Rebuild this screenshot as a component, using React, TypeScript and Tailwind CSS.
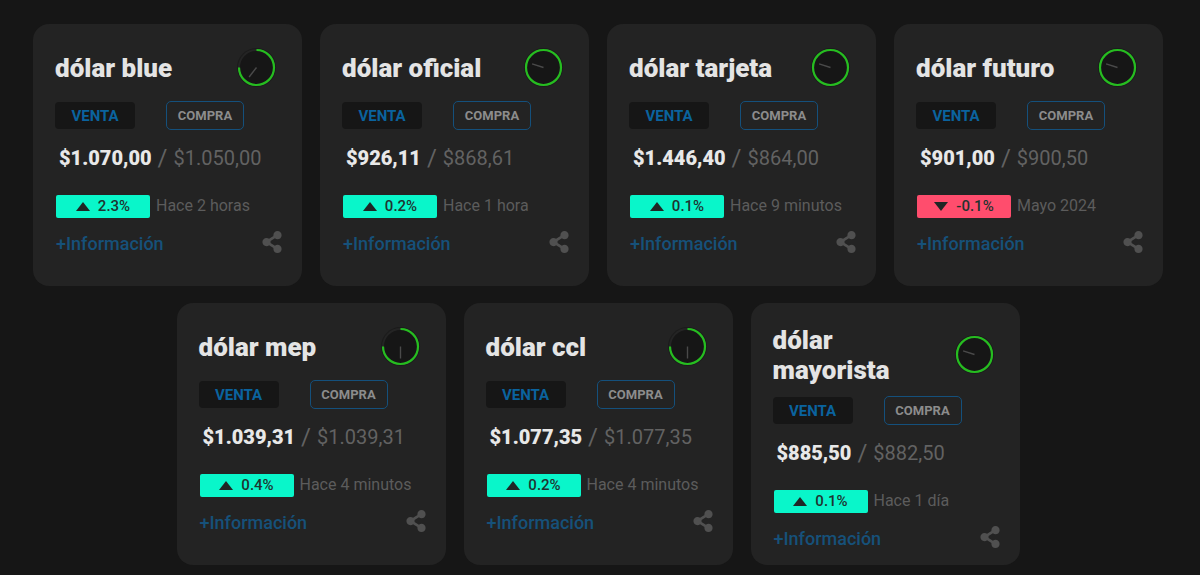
import { FaShareAlt } from 'react-icons/fa'

interface Cotizacion {
  id: string
  nombre: string
  venta: string
  compra: string
  variacion: string
  sube: boolean
  fecha: string
  progreso: number
  aguja: number
}

const cotizaciones: Cotizacion[] = [
  { id: 'blue', nombre: 'dólar blue', venta: '$1.070,00', compra: '$1.050,00', variacion: '2.3%', sube: true, fecha: 'Hace 2 horas', progreso: 75, aguja: 38 },
  { id: 'oficial', nombre: 'dólar oficial', venta: '$926,11', compra: '$868,61', variacion: '0.2%', sube: true, fecha: 'Hace 1 hora', progreso: 100, aguja: 108 },
  { id: 'tarjeta', nombre: 'dólar tarjeta', venta: '$1.446,40', compra: '$864,00', variacion: '0.1%', sube: true, fecha: 'Hace 9 minutos', progreso: 100, aguja: 108 },
  { id: 'futuro', nombre: 'dólar futuro', venta: '$901,00', compra: '$900,50', variacion: '-0.1%', sube: false, fecha: 'Mayo 2024', progreso: 100, aguja: 108 },
  { id: 'mep', nombre: 'dólar mep', venta: '$1.039,31', compra: '$1.039,31', variacion: '0.4%', sube: true, fecha: 'Hace 4 minutos', progreso: 75, aguja: 0 },
  { id: 'ccl', nombre: 'dólar ccl', venta: '$1.077,35', compra: '$1.077,35', variacion: '0.2%', sube: true, fecha: 'Hace 4 minutos', progreso: 75, aguja: 0 },
  { id: 'mayorista', nombre: 'dólar mayorista', venta: '$885,50', compra: '$882,50', variacion: '0.1%', sube: true, fecha: 'Hace 1 día', progreso: 100, aguja: 108 },
]

function Reloj({ progreso, aguja }: { progreso: number; aguja: number }) {
  return (
    <svg className="w-11 h-11 shrink-0" viewBox="0 0 44 44" fill="none" aria-hidden="true">
      <circle cx="22.5" cy="21.5" r="19.5" fill="#1b1b1b" />
      <circle cx="22.5" cy="21.5" r="17.5" fill="#161616" stroke="#242424" strokeWidth="2" />
      <circle
        cx="22.5"
        cy="21.5"
        r="17.5"
        stroke="#26bd20"
        strokeWidth="2.2"
        pathLength={100}
        strokeDasharray={`${progreso} 100`}
        transform="rotate(-90 22.5 21.5)"
      />
      {/* 0 grados apunta hacia abajo */}
      <path d="M22.5 21.5v12" stroke="#4a4a4a" strokeWidth="1.4" transform={`rotate(${aguja} 22.5 21.5)`} />
    </svg>
  )
}

function Tarjeta({ cotizacion }: { cotizacion: Cotizacion }) {
  const { id, nombre, venta, compra, variacion, sube, fecha, progreso, aguja } = cotizacion

  return (
    <article className="w-[269px] min-h-[262px] rounded-2xl bg-[#232323] pt-[22px] pb-3 pl-[22px] pr-6">
      <div className="flex items-center justify-between">
        <h2 className="pr-3 text-[26px] leading-[30px] font-black text-[#e4e4e4]">{nombre}</h2>
        <Reloj progreso={progreso} aguja={aguja} />
      </div>

      <div className="mt-[11px] flex items-center gap-[31px]">
        <button type="button" className="w-20 h-[27px] rounded bg-[#161616] pt-px text-[15px] font-bold text-[#0a639e]">
          VENTA
        </button>
        <button type="button" className="w-[78px] h-[29px] rounded-[5px] border border-[#14507c] pt-px text-[13px] font-bold text-[#8c8c8c]">
          COMPRA
        </button>
      </div>

      <p className="mt-3 pl-1 flex items-center gap-[6px] leading-8 whitespace-nowrap">
        <span className="text-xl font-black text-[#e8e8e8]">{venta}</span>
        <span className="text-2xl text-[#626262]">/</span>
        <span className="text-xl text-[#626262]">{compra}</span>
      </p>

      <div className="mt-5 flex items-center gap-[6px] pl-px">
        <span className={`flex w-[94px] h-[23px] items-center justify-center gap-2 rounded-xs text-[15px] font-medium text-[#1f3330] ${sube ? 'bg-[#09f6ca]' : 'bg-[#ff4d6d]'}`}>
          <svg className="w-[14px] h-[9px]" viewBox="0 0 14 9" fill="#1f2625" aria-hidden="true">
            <path d={sube ? 'M7 0l7 9H0z' : 'M7 9L0 0h14z'} />
          </svg>
          {variacion}
        </span>
        <span className="text-base leading-6 whitespace-nowrap text-[#5c5c5c]">{fecha}</span>
      </div>

      <div className="mt-3 -mr-1 flex h-7 items-center justify-between pl-px">
        <a href={`#${id}`} className="text-lg font-medium text-[#16517a]">+Información</a>
        <button type="button" aria-label={`Compartir ${nombre}`} className="pb-1 text-[#505050]">
          <FaShareAlt className="w-5 h-[22px]" />
        </button>
      </div>
    </article>
  )
}

export default function App() {
  return (
    <main className="min-h-screen bg-[#161616] pt-6 pb-[10px] pl-8 pr-9 font-['Roboto',sans-serif]">
      <div className="flex flex-wrap justify-center gap-x-[18px] gap-y-[17px]">
        {cotizaciones.map((cotizacion) => (
          <Tarjeta key={cotizacion.id} cotizacion={cotizacion} />
        ))}
      </div>
    </main>
  )
}
